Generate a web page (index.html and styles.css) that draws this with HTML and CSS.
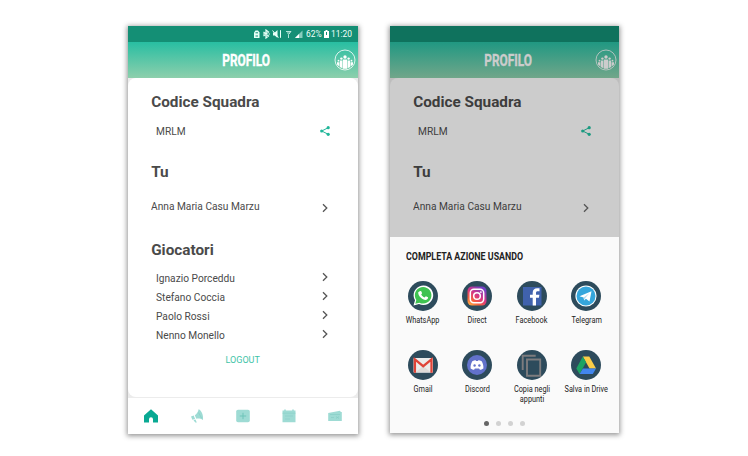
FILE: index.html
```html
<!DOCTYPE html>
<html lang="it">
<head>
<meta charset="utf-8">
<title>Profilo</title>
<link rel="stylesheet" href="styles.css">
</head>
<body>
<svg class="defs" width="0" height="0" aria-hidden="true">
  <symbol id="chevron" viewBox="0 0 6 10"><path d="M1 1.200 4.800 5 1 8.800" fill="none" stroke="currentColor" stroke-width="1.300"/></symbol>
  <symbol id="share" viewBox="0 0 10 10"><path d="M8.300 1.700 1.700 5l6.600 3.300" fill="none" stroke="currentColor" stroke-width="1"/><circle cx="8.200" cy="1.700" r="1.600" fill="currentColor"/><circle cx="1.700" cy="5" r="1.600" fill="currentColor"/><circle cx="8.200" cy="8.300" r="1.600" fill="currentColor"/></symbol>
  <symbol id="team" viewBox="0 0 22 22">
    <circle cx="11" cy="11" r="10" fill="none" stroke="currentColor" stroke-width=".8"/>
    <g fill="currentColor"><circle cx="11" cy="8" r="1.700"/><circle cx="7.400" cy="9.600" r="1.200"/><circle cx="14.600" cy="9.600" r="1.200"/><circle cx="4.500" cy="11.700" r=".9"/><circle cx="17.500" cy="11.700" r=".9"/>
    <path d="M8.900 10.500h4.200v9.300H8.900zM5.900 11.500h2.500v7.800l-2.500-1.200zM13.600 11.500h2.500v6.600l-2.500 1.200zM3 13.200h2.400v4.400L3 15.500zM16.600 13.200H19v2.300l-2.400 2.100z"/></g>
  </symbol>
</svg>
<main class="stage">
  <section class="phone">
    <div class="status">
      <svg class="status-icons" width="52" height="10" viewBox="0 0 52 10" fill="none" stroke="#e8fff8" stroke-width="1">
        <path d="M1 9V3.500L2.500 1.500h2.500L6.500 3.500V9z" fill="#e8fff8" stroke="none"/><path d="M2.500 3.800h2.500M2.500 7h2.500" stroke="#148f75"/>
        <path d="m10.500 3 5 4-2.500 2V1l2.500 2-5 4M10 5h1.500M15.500 5H17" stroke-width="1.200"/>
        <path d="M20 3.500h1.800L24.500 1v8l-2.700-2.500H20z" fill="#e8fff8" stroke="none"/><path d="m19.500 1.500 6 7M27.500 1.200v7.600"/>
        <path d="M33 2.500h5l-2.500 3V9M34 4h3" opacity=".75"/>
        <path d="M49.500 1.500V9H42z" fill="#e8fff8" opacity=".55" stroke="none"/><path d="M46 5v4h-4z" fill="#fff" stroke="none"/>
      </svg>
      <span class="percent">62%</span>
      <svg class="battery" width="5" height="8" viewBox="0 0 5 8"><path d="M1.500 0h2v1H5v7H0V1h1.500z" fill="#fff"/><path d="M2.500 2v3" stroke="#148f75"/></svg>
      <span class="clock">11:20</span>
    </div>
    <header class="bar"><h1>PROFILO</h1><svg class="team"><use href="#team"/></svg></header>
    <div class="backing">
      <div class="card">
        <h2>Codice Squadra</h2>
        <div class="row code"><span>MRLM</span><svg class="share"><use href="#share"/></svg></div>
        <h2>Tu</h2>
        <div class="row you"><span>Anna Maria Casu Marzu</span><svg class="chev"><use href="#chevron"/></svg></div>
        <h2>Giocatori</h2>
        <ul class="players">
          <li class="row"><span>Ignazio Porceddu</span><svg class="chev"><use href="#chevron"/></svg></li>
          <li class="row"><span>Stefano Coccia</span><svg class="chev"><use href="#chevron"/></svg></li>
          <li class="row"><span>Paolo Rossi</span><svg class="chev"><use href="#chevron"/></svg></li>
          <li class="row"><span>Nenno Monello</span><svg class="chev"><use href="#chevron"/></svg></li>
        </ul>
        <a class="logout">LOGOUT</a>
      </div>
    </div>
    <nav class="tabs">
      <svg class="active" viewBox="0 0 16 16"><path d="M8 1.200 15 7.500V14.500h-5v-3.200a2 2 0 0 0-4 0v3.200H1V7.500z" fill="currentColor"/></svg>
      <svg viewBox="0 0 16 16"><path d="M9.600 1.300c3 1.200 5 6 4.400 10.700-2.400-1.400-4.600-1.700-6.700-1.200L5.800 7.300c1.900-1.200 3.300-3.200 3.800-6zM2 8.400l2.700-.9 1.400 3.400-2.700.8zM4.500 12.200l2-.6 1.300 2.900-1.500.1z" fill="currentColor"/><path d="m9.500 4.500 3 5.500" stroke="#86cfc6" stroke-width=".7"/></svg>
      <svg viewBox="0 0 16 16"><rect x="1.200" y="1.700" width="13.600" height="12.600" rx="1.800" fill="currentColor"/><path d="M8 4.800v6.400M4.800 8h6.400" stroke="#6fc4b9" stroke-width="1"/></svg>
      <svg viewBox="0 0 16 16"><path d="M1.500 2.500h1.700v-1h1.600v1h6.400v-1h1.600v1h1.700v11.800h-13z" fill="currentColor"/><path d="M1.500 5.200h13M4 8h8M4 11h5" stroke="#86cfc6" stroke-width=".6"/></svg>
      <svg viewBox="0 0 16 16"><path d="M1.200 5 13 2.800l.8 1.200h1v9H1.200z" fill="currentColor"/><path d="M3 6.500h10M4 9.500h3M9 8.500l3 2M9 10.500l3-2" stroke="#86cfc6" stroke-width=".7"/></svg>
    </nav>
  </section>

  <section class="phone sharing">
    <div class="status"></div>
    <header class="bar"><h1>PROFILO</h1><svg class="team"><use href="#team"/></svg></header>
    <div class="backing">
      <div class="card">
        <h2>Codice Squadra</h2>
        <div class="row code"><span>MRLM</span><svg class="share"><use href="#share"/></svg></div>
        <h2>Tu</h2>
        <div class="row you"><span>Anna Maria Casu Marzu</span><svg class="chev"><use href="#chevron"/></svg></div>
      </div>
    </div>
    <div class="sheet">
      <h3>COMPLETA AZIONE USANDO</h3>
      <div class="apps">
        <div class="app"><svg viewBox="0 0 30 30"><circle cx="15" cy="15" r="15" fill="#2d4b5c"/><path d="M5.500 24.500 7 19.300A9.800 9.800 0 1 1 11 23z" fill="#fff"/><path d="m7.300 22.700 1-3.700A8.300 8.300 0 1 1 11.400 21.700z" fill="#3fc351"/><path d="M11.800 10.300c.6-.6 1.300-.5 1.600.2l.7 1.700-.9 1.200c.8 1.500 1.800 2.400 3.400 3.200l1.200-1.300 2.200 1c.4.500-.3 2.600-2.300 2.700-3.400 0-7.500-4-7.500-7.200 0-.6.700-1 1.600-1.500z" fill="#fff"/></svg><span>WhatsApp</span></div>
        <div class="app"><svg viewBox="0 0 30 30"><defs><linearGradient id="ig" x1="0" y1="1" x2=".7" y2="0"><stop offset="0" stop-color="#ffc347"/><stop offset=".3" stop-color="#f8603b"/><stop offset=".6" stop-color="#d53586"/><stop offset="1" stop-color="#7341c8"/></linearGradient></defs><circle cx="15" cy="15" r="15" fill="#2d4b5c"/><rect x="5.500" y="5.500" width="19" height="19" rx="4.500" fill="url(#ig)"/><g fill="none" stroke="#fff" stroke-width="1.500"><rect x="8.300" y="8.300" width="13.400" height="13.400" rx="3.600"/><circle cx="15" cy="15" r="3.300"/></g><circle cx="18.900" cy="11.100" r=".9" fill="#fff"/></svg><span>Direct</span></div>
        <div class="app"><svg viewBox="0 0 30 30"><circle cx="15" cy="15" r="15" fill="#2d4b5c"/><path d="M6 6h18.500v18.500H6z" fill="#4062ad"/><path d="M15.700 24.500v-7.700H13v-3h2.700v-2c0-3 1.700-4.500 4.600-4.500h2.200v3h-1.700c-1.300 0-1.800.6-1.800 1.700v1.800h3.400l-.5 3H19v7.700z" fill="#fff"/></svg><span>Facebook</span></div>
        <div class="app"><svg viewBox="0 0 30 30"><circle cx="15" cy="15" r="15" fill="#2d4b5c"/><circle cx="15" cy="15" r="10.600" fill="#fff"/><circle cx="15" cy="15" r="9.500" fill="#35a6dc"/><path d="m8.500 15.200 12-5-2 10.200-3.600-2.700-1.800 1.800-.5-3z" fill="#fff"/><path d="m12.600 16.500 5.700-4.200-4.200 5-.9 2z" fill="#b9dced"/></svg><span>Telegram</span></div>
        <div class="app"><svg viewBox="0 0 30 30"><circle cx="15" cy="15" r="15" fill="#2d4b5c"/><rect x="5.500" y="8" width="19.500" height="14.700" rx="1" fill="#ececeb"/><path d="m8 22 7.200-6 7.200 6" fill="#dedbd9"/><path d="M6.900 22.700V9.400l8.300 6.800 8.300-6.800v13.300" fill="none" stroke="#df4438" stroke-width="2.300"/></svg><span>Gmail</span></div>
        <div class="app"><svg viewBox="0 0 30 30"><circle cx="15" cy="15" r="15" fill="#2d4b5c"/><circle cx="15" cy="15" r="10" fill="#6272cb"/><path d="M10.300 11.200c1.500-.7 2.500-.9 3.300-.9l.5.700h1.800l.5-.7c.8 0 1.800.2 3.300.9 1.300 2.400 1.900 4.500 1.700 7.300-1.300.9-2.500 1.200-3.500 1.300l-.8-1.200h-4.200l-.8 1.200c-1-.1-2.200-.4-3.500-1.300-.2-2.800.4-4.900 1.700-7.300z" fill="#fff"/><circle cx="12.600" cy="15.500" r="1.200" fill="#6272cb"/><circle cx="17.400" cy="15.500" r="1.200" fill="#6272cb"/></svg><span>Discord</span></div>
        <div class="app"><svg viewBox="0 0 30 30"><circle cx="15" cy="15" r="15" fill="#2d4b5c"/><path d="M5.700 20V5.700h13M10 9.500h13.200v16.200H10z" fill="none" stroke="#7d7c7e" stroke-width="1.900"/></svg><span>Copia negli<br>appunti</span></div>
        <div class="app"><svg viewBox="0 0 30 30"><circle cx="15" cy="15" r="15" fill="#2d4b5c"/><path d="M11.800 6.500h6.500l6.700 12h-6.500z" fill="#fccd48"/><path d="m11.800 6.500 3.300 5.700L8.600 24l-3.300-5.600z" fill="#1da363"/><path d="M11.900 18.500H25L21.800 24H8.600z" fill="#4286ee"/></svg><span>Salva in Drive</span></div>
      </div>
      <div class="dots"><i class="on"></i><i></i><i></i><i></i></div>
    </div>
  </section>
</main>
</body>
</html>
```
FILE: styles.css
```css
* { box-sizing: border-box; margin: 0; padding: 0; }
body { width: 748px; height: 456px; overflow: hidden; background: #fff; font-family: Roboto, sans-serif; color: #4a4a4a; }
svg { display: block; flex: none; }
.defs { display: none; }
.stage { display: flex; gap: 32px; padding: 26px 0 0 128px; }
.phone { width: 230px; height: 408px; background: #fff; box-shadow: 0 1px 5px 1px rgba(0, 0, 0, .42); display: flex; flex-direction: column; }
.sharing { width: 229px; height: 407px; }

.status { height: 16px; flex: none; background: #148f75; display: flex; align-items: center; padding-left: 124.500px; color: #effffa; font-size: 9.800px; line-height: 16px; }
.percent, .clock { transform-origin: left center; white-space: nowrap; }
.percent { width: 16px; margin-left: 1px; transform: scaleX(.86); }
.battery { margin: 0 2px 0 2.500px; }
.clock { transform: scaleX(.86); }

.bar { height: 36px; flex: none; display: grid; grid-template-columns: 22px 1fr 22px; align-items: center; padding: 0 2px 0 9px; background: linear-gradient(#28bea2, #8dcfac); color: #fff; }
.bar h1 { grid-column: 2; justify-self: center; font-size: 17px; line-height: 35px; font-weight: 700; transform: scaleX(.7); white-space: nowrap; -webkit-text-stroke: .4px currentColor; }
.team { width: 22px; height: 22px; }

.backing { background: #ececec; height: 320px; flex: none; }
.card { height: 319px; background: #fff; border-radius: 8px; padding: 14px 28px 0 23.200px; }
h2 { font-size: 15.300px; line-height: 20px; font-weight: 700; color: #4a4a4a; }
.row { display: flex; justify-content: space-between; align-items: center; font-size: 10.500px; line-height: 20px; }
.row span { white-space: nowrap; transform: scaleX(.97); transform-origin: left; }
.code { margin: 10px 0 20px; padding-left: 5px; }
.you { margin: 15px 0 23px; }
.you .chev { margin-top: 2px; }
.chev { width: 6px; height: 10px; margin-right: 2.300px; color: #555; }
.share { width: 10px; height: 10px; margin: -2px 0 0; color: #20b699; }
.players { list-style: none; margin-top: 9px; }
.players .row { height: 19px; padding-left: 5px; }
.players .chev { margin-top: -3px; margin-right: 2px; }
.logout { display: block; margin: 5px 0 0 3.500px; text-align: center; font-size: 9.500px; line-height: 20px; color: #3fc4a8; transform: scaleX(.95); }

.tabs { height: 36px; display: flex; justify-content: space-around; align-items: center; background: #fff; }
.tabs svg { width: 16px; height: 16px; color: #9edbd4; }
.tabs .active { color: #09a993; }

.sharing .status { background: #0f725d; }
.sharing .bar { background: linear-gradient(#209882, #71a68a); color: #ccc; }
.sharing .backing { height: 158.500px; background: #bdbdbd; }
.sharing .card { height: 158.500px; background: #ccc; border-radius: 8px 8px 0 0; }
.sharing .card, .sharing h2 { color: #3d3d3d; }
.sharing .share { color: #1a9a80; }

.sheet { flex: 1; background: #fafafa; color: #222; }
.sheet h3 { margin: 10px 0 0 15.500px; font-size: 10px; line-height: 20px; font-weight: 700; white-space: nowrap; transform: scaleX(.885); transform-origin: left; }
.apps { display: grid; grid-template-columns: repeat(4, 54.600px); grid-template-rows: 69px 69px; margin: 14.200px 0 0 5.400px; }
.app { display: flex; flex-direction: column; align-items: center; }
.app svg { width: 30px; height: 30px; }
.app span { margin-top: 4px; white-space: nowrap; font-size: 8.500px; line-height: 10px; text-align: center; transform: scaleX(.86); }
.dots { display: flex; gap: 7px; margin: 2.500px 0 0 94px; }
.dots i { width: 5px; height: 5px; border-radius: 50%; background: #d2d2d2; }
.dots .on { background: #666; }
```
